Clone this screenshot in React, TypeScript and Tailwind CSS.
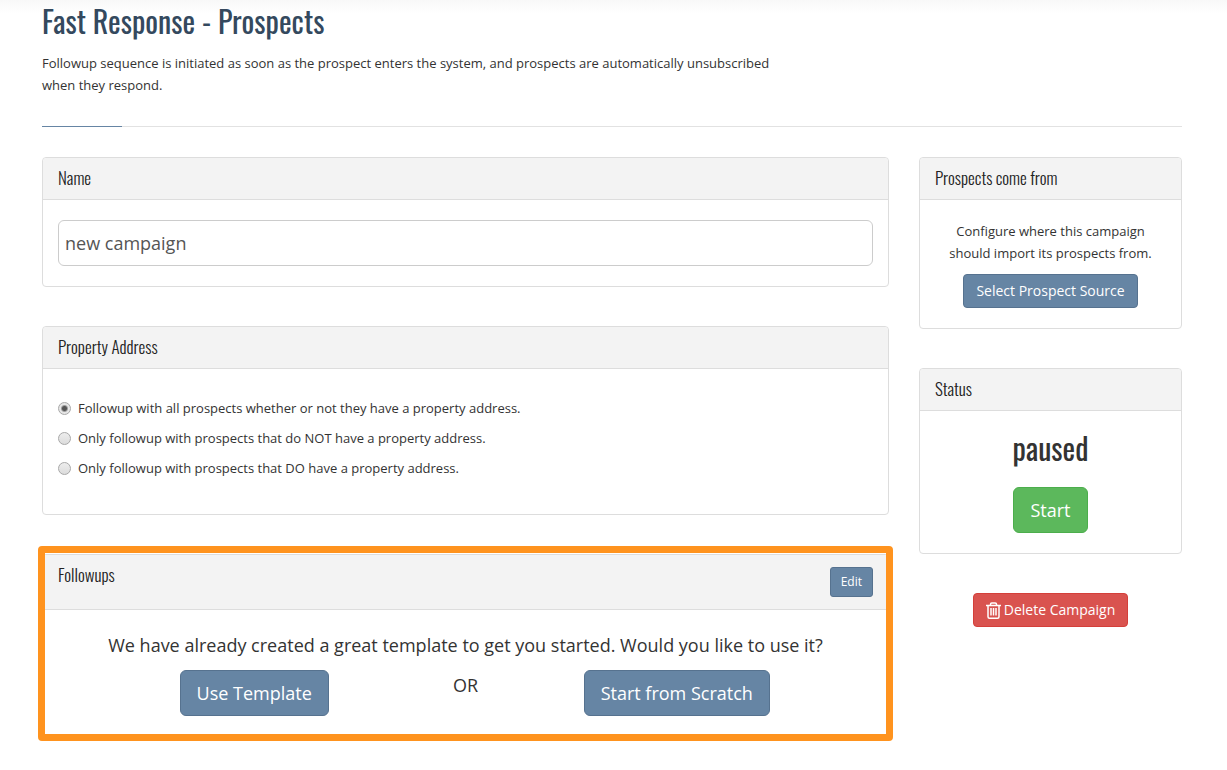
import { useState } from "react";
import type { ReactNode } from "react";

const addressOptions = [
  "Followup with all prospects whether or not they have a property address.",
  "Only followup with prospects that do NOT have a property address.",
  "Only followup with prospects that DO have a property address.",
];

function Panel({
  title,
  action,
  children,
}: {
  title: string;
  action?: ReactNode;
  children: ReactNode;
}) {
  return (
    <section className="rounded border border-[#dddddd] bg-white">
      <div
        className={`flex items-start justify-between rounded-t border-b border-[#dddddd] bg-[#f3f3f3] px-[15px] pt-[9px] ${
          action ? "pb-3" : "pb-[11px]"
        }`}
      >
        <h2 className="font-['Oswald',sans-serif] text-[17px] leading-[21px] font-light text-[#222222]">
          {title}
        </h2>
        {action}
      </div>
      {children}
    </section>
  );
}

function TrashIcon() {
  return (
    <svg
      width="15"
      height="17"
      viewBox="0 0 15 17"
      fill="none"
      stroke="currentColor"
      strokeWidth="1.5"
      aria-hidden="true"
    >
      <path d="M0 3.5h15M4.5 3.5V2.2c0-.8.5-1.3 1.3-1.3h3.4c.8 0 1.3.5 1.3 1.3v1.3" />
      <path d="M2 3.5v11.2c0 .9.6 1.5 1.5 1.5h8c.9 0 1.5-.6 1.5-1.5V3.5" />
      <path d="M5 6v7.5M7.5 6v7.5M10 6v7.5" />
    </svg>
  );
}

export default function App() {
  const [name, setName] = useState("new campaign");
  const [address, setAddress] = useState(0);

  return (
    <main className="bg-linear-to-b from-[#f8f8f8] to-white to-[14px] pr-[45px] pb-8 pl-[42px] font-['Open_Sans',sans-serif] text-[13px] leading-[22px] text-[#333333]">
      <header>
        <h1 className="pt-[3px] font-['Oswald',sans-serif] text-[30px] leading-9 text-[#34495e]">
          Fast Response - Prospects
        </h1>
        <p className="mt-[13px] max-w-[750px]">
          Followup sequence is initiated as soon as the prospect enters the
          system, and prospects are automatically unsubscribed when they
          respond.
        </p>
        <div className="mt-[30px] h-px bg-[#e2e2e2]">
          <div className="h-px w-20 bg-[#6685a4]" />
        </div>
      </header>

      <div className="mt-[30px] grid grid-cols-[minmax(0,847fr)_minmax(0,263fr)] items-start gap-[30px]">
        <div className="flex flex-col gap-[39px]">
          <Panel title="Name">
            <div className="px-[15px] py-5">
              <input
                type="text"
                aria-label="Name"
                value={name}
                onChange={(e) => setName(e.target.value)}
                className="block h-[46px] w-full rounded-md border border-[#cccccc] bg-white px-1.5 text-lg text-[#555555] outline-none"
              />
            </div>
          </Panel>

          <Panel title="Property Address">
            <div className="space-y-2 px-[15px] pt-7 pb-[35px]">
              {addressOptions.map((option, i) => (
                <label key={option} className="flex items-center gap-[7px]">
                  <input
                    type="radio"
                    name="address"
                    checked={address === i}
                    onChange={() => setAddress(i)}
                    className="size-[13px] appearance-none rounded-full border border-[#a8a8a8] bg-linear-to-b from-[#ededed] to-[#dcdcdc] checked:bg-[radial-gradient(circle,#555555_2px,#e6e6e6_4px)]"
                  />
                  {option}
                </label>
              ))}
            </div>
          </Panel>

          <div className="relative">
            <Panel
              title="Followups"
              action={
                <button className="mt-[3px] rounded-[3px] border border-[#56728f] bg-[#6685a4] px-2.5 py-[5px] text-xs leading-[18px] text-white">
                  Edit
                </button>
              }
            >
              <div className="pt-[23px] pb-5 text-center text-lg leading-6">
                <p>
                  We have already created a great template to get you started.
                  Would you like to use it?
                </p>
                <div className="mx-auto mt-[13px] grid w-3/4 grid-cols-3">
                  <div className="flex justify-center">
                    <button className="rounded-md border border-[#56728f] bg-[#6685a4] px-4 py-2.5 whitespace-nowrap text-white">
                      Use Template
                    </button>
                  </div>
                  <p className="pt-[3px]">OR</p>
                  <div className="flex justify-center">
                    <button className="rounded-md border border-[#56728f] bg-[#6685a4] px-4 py-2.5 whitespace-nowrap text-white">
                      Start from Scratch
                    </button>
                  </div>
                </div>
              </div>
            </Panel>
            {/* highlight frame over the panel edges */}
            <div className="pointer-events-none absolute -inset-x-1 -top-2 -bottom-1 rounded border-[7px] border-[#ff931e]" />
          </div>
        </div>

        <aside className="flex flex-col gap-[39px]">
          <Panel title="Prospects come from">
            <div className="px-[15px] py-5 text-center">
              <p>Configure where this campaign should import its prospects from.</p>
              <button className="mt-2.5 rounded border border-[#56728f] bg-[#6685a4] px-3 py-1.5 text-sm text-white">
                Select Prospect Source
              </button>
            </div>
          </Panel>

          <Panel title="Status">
            <div className="px-[15px] pt-[19px] pb-5 text-center">
              <p className="font-['Oswald',sans-serif] text-[30px] leading-9">
                paused
              </p>
              <button className="mt-[21px] rounded-md border border-[#4cae4c] bg-[#5cb85c] px-4 py-2.5 text-lg leading-6 text-white">
                Start
              </button>
            </div>
          </Panel>

          <button className="flex items-center gap-[3px] self-center rounded border border-[#d43f3a] bg-[#d9534f] px-3 py-1.5 text-sm leading-5 text-white">
            <TrashIcon />
            Delete Campaign
          </button>
        </aside>
      </div>
    </main>
  );
}
